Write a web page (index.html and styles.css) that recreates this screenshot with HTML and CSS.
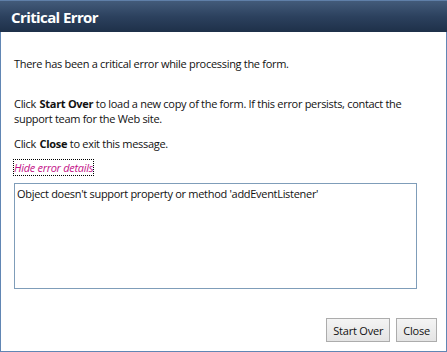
FILE: index.html
```html
<!DOCTYPE html>
<html>
<head>
<meta charset="utf-8">
<link rel="stylesheet" href="styles.css">
</head>
<body>
<div class="dialog">
  <div class="titlebar"><h1 class="title">Critical Error</h1></div>
  <div class="content">
    <p class="msg first">There has been a critical error while processing the form.</p>
    <p class="msg">Click <b>Start Over</b> to load a new copy of the form. If this error persists, contact the<br>support team for the Web site.</p>
    <p class="msg">Click <b>Close</b> to exit this message.</p>
    <div class="linkrow"><a class="details" href="#">Hide error details</a></div>
    <div class="errorbox">Object doesn't support property or method 'addEventListener'</div>
  </div>
  <div class="buttons">
    <button class="btn start">Start Over</button>
    <button class="btn close">Close</button>
  </div>
</div>
</body>
</html>
```
FILE: styles.css
```css
html, body {
  margin: 0;
  padding: 0;
  background: #ffffff;
}
.dialog {
  width: 447px;
  height: 352px;
  box-sizing: border-box;
  border: 1px solid #6186b4;
  border-top: none;
  display: flex;
  flex-direction: column;
  font-family: "Open Sans", "Noto Sans", sans-serif;
  font-size: 11px;
  letter-spacing: -0.3px;
  color: #111;
  background: #fff;
}
.titlebar {
  height: 32px;
  margin: 0 -1px;
  background: linear-gradient(to bottom, #435b7a 0%, #2c415e 50%, #1e3049 100%);
  border-top: 1px solid #5f7fa8;
  box-sizing: border-box;
  display: flex;
  align-items: center;
  padding-left: 11px;
}
.title {
  margin: 0;
  color: #fff;
  font-size: 15px;
  font-weight: bold;
  font-family: "Open Sans", sans-serif;
  letter-spacing: -0.6px;
}
.content {
  padding: 24px 0 0 13px;
}
.msg {
  margin: 0 0 10px 0;
  line-height: 15px;
  max-width: 420px;
}
.msg.first {
  margin-bottom: 25px;
}
.msg b {
  font-weight: bold;
  padding-left: 1px;
}
.linkrow {
  margin-top: 2px;
  line-height: 14px;
}
.details {
  color: #c4148a;
  font-style: italic;
  text-decoration: none;
  outline: 1px dotted #000;
}
.errorbox {
  margin-top: 8px;
  width: 403px;
  height: 106px;
  box-sizing: border-box;
  border: 1px solid #7f9db9;
  padding: 2px 3px 2px 2px;
  line-height: 15px;
}
.buttons {
  margin-top: auto;
  display: flex;
  justify-content: flex-end;
  gap: 6px;
  padding: 0 9px 9px 0;
}
.btn {
  height: 24px;
  font-family: "Open Sans", sans-serif;
  font-size: 11px;
  letter-spacing: -0.2px;
  color: #111;
  background: linear-gradient(to bottom, #f4f4f4, #e4e4e4);
  border: 1px solid #acacac;
  padding: 0 6px;
}
```
